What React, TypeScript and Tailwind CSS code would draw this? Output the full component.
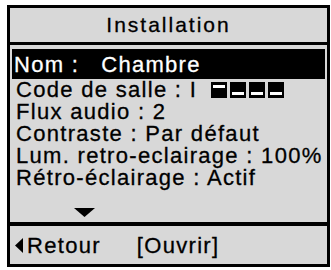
import React from "react";

const font = { fontFamily: '"Liberation Sans", Arial, sans-serif', WebkitTextStroke: "0.3px currentColor" } as React.CSSProperties;

function Box({ top }: { top?: boolean }) {
  return (
    <div className="flex h-[16px] w-[16px] flex-col bg-black px-[2px]">
      {top ? (
        <div className="mt-[3px] h-[3px] w-full bg-white" />
      ) : (
        <div className="mt-[10px] h-[3px] w-full bg-white" />
      )}
    </div>
  );
}

export default function App() {
  return (
    <div className="h-[270px] w-[331px] bg-white pl-[7px] pt-[5px]" style={font}>
      <div className="flex h-[262px] w-[323px] flex-col border-[3px] border-black bg-[#d8d8d8] text-[22px] tracking-[1.3px] text-black">
        <div className="flex h-[34px] items-center justify-center text-[21px] leading-[34px] tracking-[2px]">Installation</div>
        <div className="h-[3px] bg-black" />
        <div className="flex h-[177px] flex-col px-[2px] pt-[4px]">
          <div className="flex h-[30px] items-center whitespace-pre bg-black pl-[2px] text-white">
            <span>Nom :</span>
            <span className="ml-[22px]">Chambre</span>
          </div>
          <div className="flex h-[22px] items-center pl-[4px] leading-[22px]">
            <span>Code de salle : I</span>
            <div className="ml-[14px] flex gap-[3px]">
              <Box top />
              <Box />
              <Box />
              <Box />
            </div>
          </div>
          <div className="h-[22px] pl-[4px] leading-[22px]">Flux audio : 2</div>
          <div className="h-[22px] pl-[4px] leading-[22px]">Contraste : Par défaut</div>
          <div className="h-[22px] whitespace-nowrap pl-[4px] leading-[22px]">Lum. retro-eclairage : 100%</div>
          <div className="h-[22px] pl-[4px] leading-[22px]">Rétro-éclairage : Actif</div>
          <div className="pl-[62px] pt-[19px]">
            <svg width="21" height="9" viewBox="0 0 21 9">
              <polygon points="0,0 21,0 10.5,9" fill="black" />
            </svg>
          </div>
        </div>
        <div className="h-[4px] bg-black" />
        <div className="flex h-[38px] items-center pl-[5px]">
          <svg width="8" height="15" viewBox="0 0 8 15" className="mr-[4px]">
            <polygon points="8,0 8,15 0,7.5" fill="black" />
          </svg>
          <span>Retour</span>
          <span className="ml-[36px]">[Ouvrir]</span>
        </div>
      </div>
    </div>
  );
}
